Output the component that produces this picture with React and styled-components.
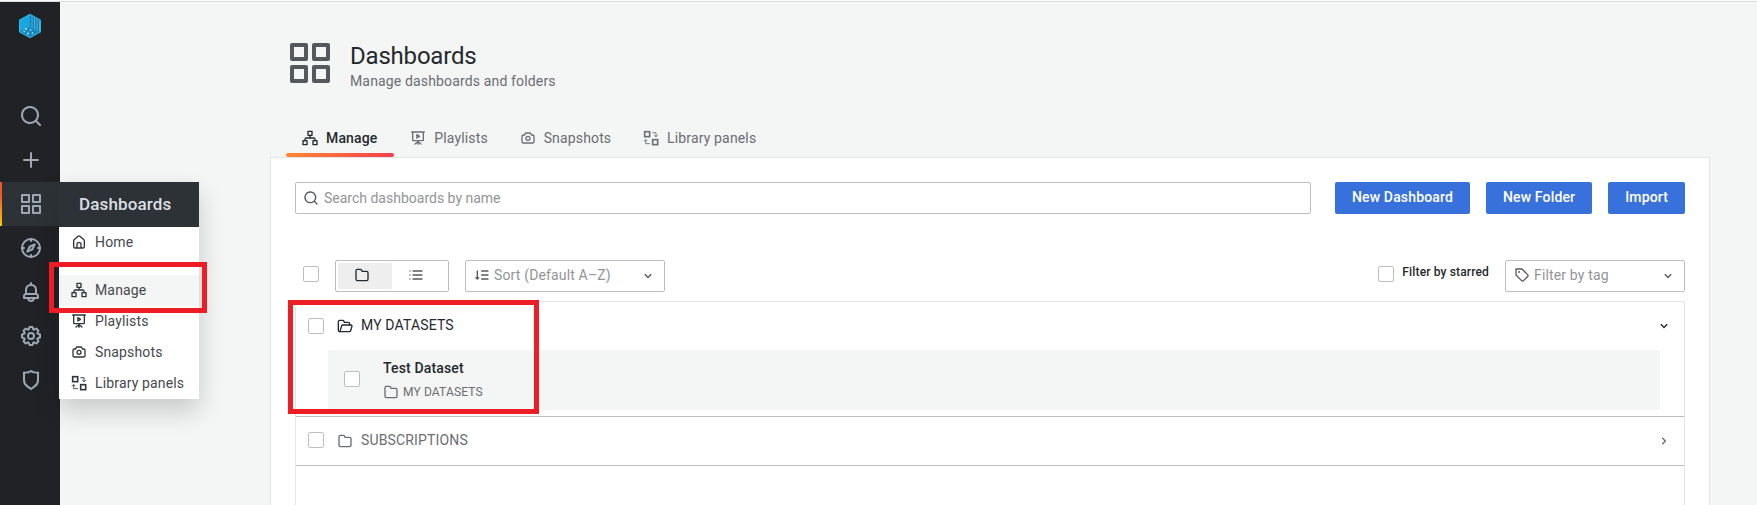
import React from 'react';
import styled, { createGlobalStyle, css } from 'styled-components';

const GlobalStyle = createGlobalStyle`
  * { box-sizing: border-box; }
  body {
    margin: 0;
    overflow: hidden;
    background: #f4f5f5;
    color: #24292e;
    font-family: Roboto, "Liberation Sans", sans-serif;
    font-size: 14px;
    line-height: 22px;
    letter-spacing: 0.15px;
  }
`;

/* ---------- icons ---------- */

const Svg = styled.svg`
  display: block;
  flex: none;
  width: ${(p) => p.$size}px;
  height: ${(p) => p.$size}px;
  fill: currentColor;
`;

const stroke = { fill: 'none', stroke: 'currentColor', strokeWidth: 2, strokeLinejoin: 'round', strokeLinecap: 'round' };

const glyphs = {
  apps: <path d="M10,13H3a1,1,0,0,0-1,1v7a1,1,0,0,0,1,1h7a1,1,0,0,0,1-1V14A1,1,0,0,0,10,13ZM9,20H4V15H9ZM21,2H14a1,1,0,0,0-1,1v7a1,1,0,0,0,1,1h7a1,1,0,0,0,1-1V3A1,1,0,0,0,21,2ZM20,9H15V4h5Zm1,4H14a1,1,0,0,0-1,1v7a1,1,0,0,0,1,1h7a1,1,0,0,0,1-1V14A1,1,0,0,0,21,13Zm-1,7H15V15h5ZM10,2H3A1,1,0,0,0,2,3v7a1,1,0,0,0,1,1h7a1,1,0,0,0,1-1V3A1,1,0,0,0,10,2ZM9,9H4V4H9Z" />,
  search: <path d="M21.71,20.29,18,16.61A9,9,0,1,0,16.61,18l3.68,3.68a1,1,0,0,0,1.42,0A1,1,0,0,0,21.71,20.29ZM11,18a7,7,0,1,1,7-7A7,7,0,0,1,11,18Z" />,
  plus: <path d="M19,11H13V5a1,1,0,0,0-2,0v6H5a1,1,0,0,0,0,2h6v6a1,1,0,0,0,2,0V13h6a1,1,0,0,0,0-2Z" />,
  compass: (
    <g {...stroke}>
      <circle cx="12" cy="12" r="9" />
      <path d="M12 3v2M12 19v2M3 12h2M19 12h2" />
      <path d="M15.7 8.3l-5.1 2.3-2.3 5.1 5.1-2.3z" />
      <path d="M12 12h.01" strokeWidth="1.4" />
    </g>
  ),
  bell: <path d="M18,13.18V10a6,6,0,0,0-5-5.91V3a1,1,0,0,0-2,0V4.09A6,6,0,0,0,6,10v3.18A3,3,0,0,0,4,16v2a1,1,0,0,0,1,1H8.14a4,4,0,0,0,7.72,0H19a1,1,0,0,0,1-1V16A3,3,0,0,0,18,13.18ZM8,10a4,4,0,0,1,8,0v3H8Zm4,10a2,2,0,0,1-1.72-1h3.44A2,2,0,0,1,12,20Zm6-3H6V16a1,1,0,0,1,1-1H17a1,1,0,0,1,1,1Z" />,
  cog: <path d="M21.32,9.55l-1.89-.63.89-1.78A1,1,0,0,0,20.13,6L18,3.87a1,1,0,0,0-1.15-.19l-1.78.89-.63-1.89A1,1,0,0,0,13.5,2h-3a1,1,0,0,0-.95.68L8.92,4.57,7.14,3.68A1,1,0,0,0,6,3.87L3.87,6a1,1,0,0,0-.19,1.15l.89,1.78-1.89.63A1,1,0,0,0,2,10.5v3a1,1,0,0,0,.68.95l1.89.63-.89,1.78A1,1,0,0,0,3.87,18L6,20.13a1,1,0,0,0,1.15.19l1.78-.89.63,1.89a1,1,0,0,0,.95.68h3a1,1,0,0,0,.95-.68l.63-1.89,1.78.89A1,1,0,0,0,18,20.13L20.13,18a1,1,0,0,0,.19-1.15l-.89-1.78,1.89-.63A1,1,0,0,0,22,13.5v-3A1,1,0,0,0,21.32,9.55ZM20,12.78l-1.2.4A2,2,0,0,0,17.64,16l.57,1.14-1.1,1.1L16,17.64a2,2,0,0,0-2.79,1.16l-.4,1.2H11.22l-.4-1.2A2,2,0,0,0,8,17.64l-1.14.57-1.1-1.1L6.36,16A2,2,0,0,0,5.2,13.18L4,12.78V11.22l1.2-.4A2,2,0,0,0,6.36,8L5.79,6.89l1.1-1.1L8,6.36A2,2,0,0,0,10.82,5.2l.4-1.2h1.56l.4,1.2A2,2,0,0,0,16,6.36l1.14-.57,1.1,1.1L17.64,8a2,2,0,0,0,1.16,2.79l1.2.4ZM12,8a4,4,0,1,0,4,4A4,4,0,0,0,12,8Zm0,6a2,2,0,1,1,2-2A2,2,0,0,1,12,14Z" />,
  shield: <path d="M19.63,3.65a1,1,0,0,0-.84-.2,8,8,0,0,1-6.22-1.27,1,1,0,0,0-1.14,0A8,8,0,0,1,5.21,3.45a1,1,0,0,0-.84.2A1,1,0,0,0,4,4.43v7.45a9,9,0,0,0,3.77,7.33l3.65,2.6a1,1,0,0,0,1.16,0l3.65-2.6A9,9,0,0,0,20,11.88V4.43A1,1,0,0,0,19.63,3.65ZM18,11.88a7,7,0,0,1-2.93,5.7L12,19.77,8.93,17.58A7,7,0,0,1,6,11.88V5.58a10,10,0,0,0,6-1.39,10,10,0,0,0,6,1.39Z" />,
  folder: <path d="M19,5.5H12.72l-.32-1a3,3,0,0,0-2.84-2H5a3,3,0,0,0-3,3v13a3,3,0,0,0,3,3H19a3,3,0,0,0,3-3V8.5A3,3,0,0,0,19,5.5Zm1,13a1,1,0,0,1-1,1H5a1,1,0,0,1-1-1V5.5a1,1,0,0,1,1-1H9.56a1,1,0,0,1,.95.68l.54,1.64A1,1,0,0,0,12,7.5h7a1,1,0,0,1,1,1Z" />,
  folderOpen: (
    <g {...stroke}>
      <path d="M4.3 20.5H4a2 2 0 0 1-2-2v-13a2 2 0 0 1 2-2h4.5a2 2 0 0 1 1.9 1.4l.5 1.6H17a2 2 0 0 1 2 2v2" />
      <path d="M4.3 20.5l2.6-8.6a2 2 0 0 1 1.9-1.4H21a1.5 1.5 0 0 1 1.4 1.9l-2 6.7a2 2 0 0 1-1.9 1.4z" />
    </g>
  ),
  sitemap: (
    <g {...stroke}>
      <rect x="9" y="2" width="6" height="6" />
      <rect x="1.5" y="16" width="6" height="6" />
      <rect x="16.5" y="16" width="6" height="6" />
      <path d="M12 8v4M4.5 16v-2a2 2 0 0 1 2-2h11a2 2 0 0 1 2 2v2" />
    </g>
  ),
  play: (
    <g {...stroke}>
      <path d="M2.5 3h19M4 3v12a1 1 0 0 0 1 1h14a1 1 0 0 0 1-1V3M12 16v5.5M12 17.5l-4.5 3.500M12 17.5l4.5 3.5" />
      <path d="M10.300 7v5l4-2.5z" />
    </g>
  ),
  camera: <path d="M19,6.5H17.72l-.32-1a3,3,0,0,0-2.84-2H9.44A3,3,0,0,0,6.6,5.55l-.32,1H5a3,3,0,0,0-3,3v8a3,3,0,0,0,3,3H19a3,3,0,0,0,3-3v-8A3,3,0,0,0,19,6.5Zm1,11a1,1,0,0,1-1,1H5a1,1,0,0,1-1-1v-8a1,1,0,0,1,1-1H7a1,1,0,0,0,1-.68l.54-1.64a1,1,0,0,1,.95-.68h5.12a1,1,0,0,1,.95.68l.54,1.64A1,1,0,0,0,17,8.5h2a1,1,0,0,1,1,1Zm-8-9a4,4,0,1,0,4,4A4,4,0,0,0,12,8.5Zm0,6a2,2,0,1,1,2-2A2,2,0,0,1,12,14.5Z" />,
  library: (
    <g fill="none" stroke="currentColor">
      <rect x="2.5" y="2.5" width="7.5" height="7.5" strokeWidth="2.4" />
      <rect x="14.5" y="14.5" width="7.5" height="7.5" strokeWidth="2.4" />
      <path d="M14 4h5.5v6M16.8 7.6l2.7 2.7 2.7-2.7M10.5 20.5H4v-6M1.3 17l2.7-2.7L6.7 17" strokeWidth="1.3" />
    </g>
  ),
  home: <path d="M20,8h0L14,2.74a3,3,0,0,0-4,0L4,8a3,3,0,0,0-1,2.26V19a3,3,0,0,0,3,3H18a3,3,0,0,0,3-3V10.25A3,3,0,0,0,20,8ZM14,20H10V15a1,1,0,0,1,1-1h2a1,1,0,0,1,1,1Zm5-1a1,1,0,0,1-1,1H16V15a3,3,0,0,0-3-3H11a3,3,0,0,0-3,3v5H6a1,1,0,0,1-1-1V10.25a1,1,0,0,1,.34-.75l6-5.25a1,1,0,0,1,1.32,0l6,5.25a1,1,0,0,1,.34.75Z" />,
  tag: <path d="M7.5,6A1.5,1.5,0,1,0,9,7.5,1.5,1.5,0,0,0,7.5,6Zm13.62,4.71L12.71,2.29A1,1,0,0,0,12,2H3A1,1,0,0,0,2,3v9a1,1,0,0,0,.29.71l8.42,8.41a3,3,0,0,0,4.24,0L21.12,15a3,3,0,0,0,0-4.24Zm-1.41,2.82h0l-6.18,6.17a1,1,0,0,1-1.41,0L4,11.59V4h7.59l8.12,8.12a1,1,0,0,1,.29.71A1,1,0,0,1,19.71,13.53Z" />,
  list: (
    <g {...stroke}>
      <path d="M3 6h.01M3 12h.01M3 18h.01M7.5 6H21M7.5 12H21M7.5 18H21" />
    </g>
  ),
  sort: (
    <g {...stroke}>
      <path d="M5 6v12M3 16l2 2 2-2M11.5 6H21M11.5 12H21M11.5 18H21" />
    </g>
  ),
  down: <path d="M17,9.17a1,1,0,0,0-1.41,0L12,12.71,8.46,9.17a1,1,0,0,0-1.41,0,1,1,0,0,0,0,1.42l4.24,4.24a1,1,0,0,0,1.42,0L17,10.59A1,1,0,0,0,17,9.17Z" />,
  right: <path d="M14.83,11.29,10.59,7.05a1,1,0,0,0-1.42,0,1,1,0,0,0,0,1.41L12.71,12,9.17,15.54a1,1,0,0,0,0,1.41,1,1,0,0,0,1.42,0l4.24-4.24A1,1,0,0,0,14.83,11.29Z" />,
};

const Icon = ({ name, size = 16 }) => (
  <Svg viewBox="0 0 24 24" $size={size} aria-hidden="true">{glyphs[name]}</Svg>
);

const LogoSvg = styled.svg`
  display: block;
  width: 22px;
  height: 24px;
`;

const Logo = () => (
  <LogoSvg viewBox="0 0 22 24">
    <path d="M11 0l11 6v12l-11 6-11-6V6z" fill="#1595cf" />
    <path d="M11 0L0 6v12l11-5z" fill="#1ba5df" />
    <path d="M11 0v13l11 5V6z" fill="#1480b4" />
    <path d="M0 18l11-5 11 5-11 6z" fill="#1788bd" />
    <path d="M13 2v12M15.5 3.5v12M18 5v12M20.5 6.5v11" stroke="#5cc4ea" strokeWidth=".8" />
    <path d="M11 .4L.5 6.2v11.6L11 23.6l10.5-5.8V6.2z" fill="none" stroke="#35bbe9" strokeWidth=".9" />
    <g fill="#c8f4fa">
      <circle cx="7" cy="15" r=".9" /><circle cx="11.500" cy="16" r=".8" /><circle cx="5.200" cy="17.500" r=".8" />
      <circle cx="9" cy="19.500" r=".9" /><circle cx="13.500" cy="19" r=".8" />
    </g>
  </LogoSvg>
);

/* ---------- shell ---------- */

const Page = styled.div`
  position: relative;
  display: flex;
  height: 505px;
  border-top: 1px solid #fafbfb;
  overflow: hidden;
`;

const Shell = styled.div`
  display: flex;
  flex: 1;
  border-top: 1px solid #d7dcdc;
`;

const Sidebar = styled.nav`
  position: relative;
  z-index: 2;
  width: 60px;
  flex: none;
  background: #202226;
  color: #9fa7b3;
`;

const Brand = styled.div`
  height: 92px;
  padding: 12px 0 0 19px;
`;

const NavItem = styled.div`
  position: relative;
  display: flex;
  align-items: center;
  height: 44px;
  padding-left: 19px;
  ${(p) => p.$active && css`
    background: #2d3236;
    &::before {
      content: '';
      position: absolute;
      left: 0;
      top: 0;
      width: 2px;
      height: 44px;
      background: linear-gradient(#f05a28 30%, #fbca0a);
    }
  `}
`;

const Flyout = styled.div`
  position: absolute;
  left: 59px;
  top: 0;
  width: 140px;
  background: #fff;
  color: #45494f;
  box-shadow: 0 12px 24px rgba(24, 26, 27, 0.2);
`;

const FlyoutTitle = styled.div`
  height: 45px;
  padding-left: 20px;
  background: #2d3236;
  color: #dcdfe4;
  font-size: 17px;
  font-weight: 500;
  line-height: 44px;
`;

const FlyoutItem = styled.div`
  display: flex;
  align-items: center;
  gap: 8px;
  height: 31px;
  padding: 0 0 1px 12px;
  margin-top: ${(p) => (p.$separated ? 17 : 0)}px;
  background: ${(p) => (p.$active ? '#f4f5f5' : 'transparent')};
  line-height: 20px;
  svg { color: #303439; }
`;

const FlyoutLabel = styled.span`
  padding-bottom: 1px;
`;

const Main = styled.main`
  display: flex;
  flex: 1;
  flex-direction: column;
  padding: 0 47px 0 210px;
`;

const PageHeader = styled.header`
  display: flex;
  gap: 16px;
  padding: 37px 0 0 16px;
  height: 119px;
  color: #55585c;
`;

const Title = styled.h1`
  margin: 3px 0 0;
  font-size: 24px;
  font-weight: 400;
  line-height: 28px;
  letter-spacing: -0.2px;
  color: #24292e;
`;

const Subtitle = styled.div`
  color: #6a6e73;
  line-height: 22px;
`;

const Tabs = styled.div`
  display: flex;
  height: 36px;
  padding-left: 16px;
`;

const Tab = styled.div`
  position: relative;
  display: flex;
  gap: 8px;
  padding: 9px ${(p) => (p.$active ? 16.8 : 15.8)}px 0 16px;
  line-height: 17px;
  color: ${(p) => (p.$active ? '#24292e' : '#6a6e73')};
  font-weight: ${(p) => (p.$active ? 500 : 400)};
  ${(p) => p.$active && css`
    &::after {
      content: '';
      position: absolute;
      left: 0;
      right: 0;
      bottom: 0;
      height: 4px;
      border-radius: 2px;
      background: linear-gradient(90deg, #ff8833, #f53e4c);
    }
  `}
`;

const Panel = styled.section`
  display: flex;
  flex: 1;
  flex-direction: column;
  padding: 24px 24px 0;
  border: 1px solid #e3e5e5;
  border-bottom: 0;
  background: #fff;
`;

/* ---------- controls ---------- */

const Toolbar = styled.div`
  display: flex;
  gap: 16px;
`;

const Field = styled.div`
  display: flex;
  flex: none;
  width: ${(p) => p.$width}px;
  align-items: center;
  height: 32px;
  padding: 0 8px 2px;
  gap: 4px;
  border: 1px solid #bdbebf;
  border-radius: 2px;
  background: #fff;
  color: #55585c;
`;

const SearchField = styled(Field)`
  flex: 1;
  width: auto;
  gap: 5px;
  padding: 0 8px 0 7px;
  margin-right: 8px;
  letter-spacing: 0;
`;

const Placeholder = styled.span`
  flex: 1;
  color: #929497;
`;

const Caret = styled.span`
  padding-top: 2px;
`;

const Button = styled.button`
  height: 32px;
  padding: 0 17px 2px;
  border: 0;
  border-radius: 2px;
  background: #3871dc;
  color: #fff;
  font: 500 14px/30px Roboto, sans-serif;
  letter-spacing: 0.15px;
`;

const Filters = styled.div`
  display: flex;
  align-items: flex-start;
  gap: 16px;
  margin: 46px 0 9px;
  padding-left: 8px;
`;

const Checkbox = styled.span`
  flex: none;
  width: 16px;
  height: 16px;
  border: 1px solid #bdbebf;
  border-radius: 2px;
  background: #fff;
`;

const SelectAll = styled(Checkbox)`
  margin-top: 6px;
`;

const Toggle = styled.div`
  display: flex;
  width: 114px;
  height: 32px;
  padding: 2px;
  border: 1px solid #bdbebf;
  border-radius: 2px;
`;

const ToggleOption = styled.div`
  display: flex;
  flex: 1;
  align-items: center;
  justify-content: center;
  padding: 0 6px 2px 0;
  border-radius: 2px;
  background: ${(p) => (p.$active ? '#eeeeee' : 'transparent')};
  color: ${(p) => (p.$active ? '#24292e' : '#55585c')};
`;

const Starred = styled.label`
  display: flex;
  gap: 8px;
  margin: 6px 0 0 auto;
  font-size: 12px;
  font-weight: 500;
  line-height: 12px;
`;

/* ---------- folder list ---------- */

const List = styled.div`
  flex: 1;
  border: 1px solid #e3e5e5;
  border-bottom: 0;
  border-radius: 2px 2px 0 0;
`;

const Folder = styled.div`
  padding-bottom: ${(p) => (p.$open ? 6 : 0)}px;
  border-bottom: 1px solid #bdbebf;
`;

const FolderHead = styled.div`
  display: flex;
  align-items: center;
  height: 48px;
  padding: 0 12px;
  color: ${(p) => (p.$open ? '#24292e' : '#6a6e73')};
  ${Checkbox} {
    margin-bottom: ${(p) => (p.$open ? 0 : 2)}px;
  }
`;

const FolderName = styled.span`
  display: flex;
  flex: 1;
  align-items: center;
  gap: 8px;
  padding-left: 13px;
`;

const FolderLabel = styled.span`
  padding-bottom: 2px;
`;

const Item = styled.div`
  display: flex;
  align-items: center;
  height: 60px;
  margin: 0 24px 0 32px;
  padding: 0 0 2px 16px;
  gap: 23px;
  border-radius: 2px;
  background: #f4f5f5;
`;

const ItemTitle = styled.div`
  font-weight: 500;
  line-height: 20px;
`;

const ItemFolder = styled.div`
  display: flex;
  align-items: center;
  gap: 4px;
  margin-top: 5px;
  margin-bottom: -1px;
  color: #6a6e73;
  font-size: 12px;
  line-height: 18px;
`;

const Highlight = styled.div`
  position: absolute;
  z-index: 3;
  left: ${(p) => p.$x}px;
  top: ${(p) => p.$y}px;
  width: ${(p) => p.$w}px;
  height: ${(p) => p.$h}px;
  border: 5px solid #ee1c25;
`;

const navIcons = ['search', 'plus', 'apps', 'compass', 'bell', 'cog', 'shield'];

const sections = [
  { icon: 'sitemap', label: 'Manage', active: true },
  { icon: 'play', label: 'Playlists' },
  { icon: 'camera', label: 'Snapshots' },
  { icon: 'library', label: 'Library panels' },
];

export default function App() {
  return (
    <Page>
      <GlobalStyle />
      <Shell>
        <Sidebar>
          <Brand><Logo /></Brand>
          {navIcons.map((name) => (
            <NavItem key={name} $active={name === 'apps'}>
              <Icon name={name} size={24} />
              {name === 'apps' && (
                <Flyout>
                  <FlyoutTitle>Dashboards</FlyoutTitle>
                  <FlyoutItem><Icon name="home" /><FlyoutLabel>Home</FlyoutLabel></FlyoutItem>
                  {sections.map((s) => (
                    <FlyoutItem key={s.label} $active={s.active} $separated={s.active}>
                      <Icon name={s.icon} /><FlyoutLabel>{s.label}</FlyoutLabel>
                    </FlyoutItem>
                  ))}
                </Flyout>
              )}
            </NavItem>
          ))}
        </Sidebar>
        <Main>
          <PageHeader>
            <Icon name="apps" size={48} />
            <div>
              <Title>Dashboards</Title>
              <Subtitle>Manage dashboards and folders</Subtitle>
            </div>
          </PageHeader>
          <Tabs>
            {sections.map((s) => (
              <Tab key={s.label} $active={s.active}><Icon name={s.icon} />{s.label}</Tab>
            ))}
          </Tabs>
          <Panel>
            <Toolbar>
              <SearchField>
                <Icon name="search" />
                <Placeholder>Search dashboards by name</Placeholder>
              </SearchField>
              <Button>New Dashboard</Button>
              <Button>New Folder</Button>
              <Button>Import</Button>
            </Toolbar>
            <Filters>
              <SelectAll />
              <Toggle>
                <ToggleOption $active><Icon name="folder" /></ToggleOption>
                <ToggleOption><Icon name="list" /></ToggleOption>
              </Toggle>
              <Field $width={200}>
                <Icon name="sort" />
                <Placeholder>Sort (Default A–Z)</Placeholder>
                <Caret><Icon name="down" /></Caret>
              </Field>
              <Starred><Checkbox />Filter by starred</Starred>
              <Field $width={180}>
                <Icon name="tag" />
                <Placeholder>Filter by tag</Placeholder>
                <Caret><Icon name="down" /></Caret>
              </Field>
            </Filters>
            <List>
              <Folder $open>
                <FolderHead $open>
                  <Checkbox />
                  <FolderName><Icon name="folderOpen" /><FolderLabel>MY DATASETS</FolderLabel></FolderName>
                  <Icon name="down" />
                </FolderHead>
                <Item>
                  <Checkbox />
                  <div>
                    <ItemTitle>Test Dataset</ItemTitle>
                    <ItemFolder><Icon name="folder" />MY DATASETS</ItemFolder>
                  </div>
                </Item>
              </Folder>
              <Folder>
                <FolderHead>
                  <Checkbox />
                  <FolderName><Icon name="folder" /><FolderLabel>SUBSCRIPTIONS</FolderLabel></FolderName>
                  <Icon name="right" />
                </FolderHead>
              </Folder>
            </List>
          </Panel>
        </Main>
      </Shell>
      <Highlight $x={49} $y={261} $w={158} $h={51} />
      <Highlight $x={288} $y={299} $w={251} $h={114} />
    </Page>
  );
}
